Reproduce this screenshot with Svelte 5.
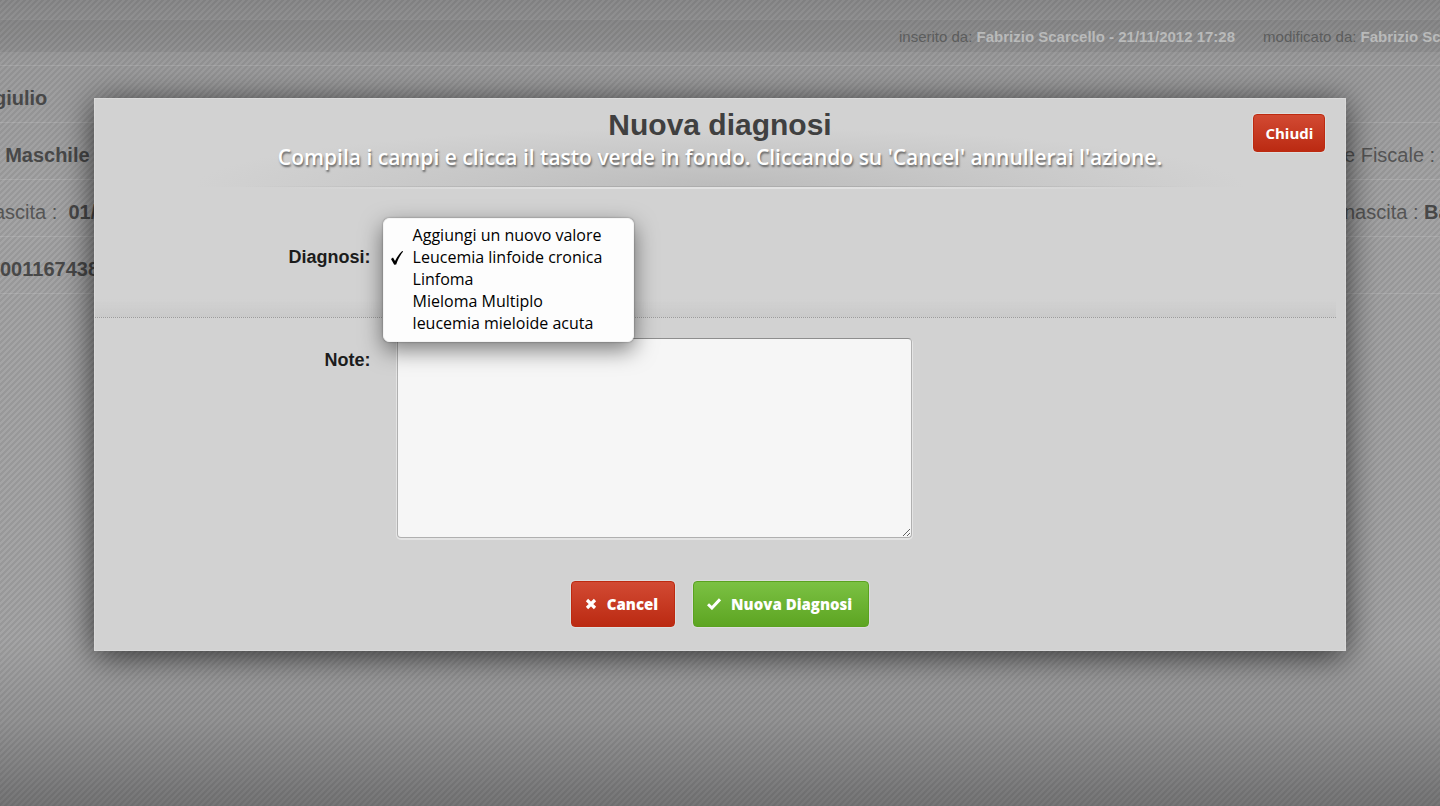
<script>
  const options = [
    'Aggiungi un nuovo valore',
    'Leucemia linfoide cronica',
    'Linfoma',
    'Mieloma Multiplo',
    'leucemia mieloide acuta'
  ];
  let diagnosis = $state('Leucemia linfoide cronica');
  let notes = $state('');
</script>

<div class="page">
  <div class="record">
    <div class="audit">
      <span>inserito da: <b>Fabrizio Scarcello - 21/11/2012 17:28</b></span>
      <span>modificato da: <b>Fabrizio Scarcello</b></span>
    </div>
    <div class="row"><span class="cut"><b>giulio</b></span></div>
    <div class="row">
      <span class="cut">: <b>Maschile</b></span>
      <span class="right">e Fiscale :</span>
    </div>
    <div class="row">
      <span class="cut">ascita : &nbsp;<b>01/</b></span>
      <span class="right">nascita : <b>Ba</b></span>
    </div>
    <div class="row"><span><b>001167438</b></span></div>
  </div>

  <div class="modal" role="dialog" aria-labelledby="title">
    <header>
      <h1 id="title">Nuova diagnosi</h1>
      <p>Compila i campi e clicca il tasto verde in fondo. Cliccando su 'Cancel' annullerai l'azione.</p>
      <button type="button" class="btn red close">Chiudi</button>
    </header>
    <form onsubmit={(e) => e.preventDefault()}>
      <div class="field diagnosis">
        <label for="diagnosis">Diagnosi:</label>
        <div class="anchor">
          <select id="diagnosis" size="5" bind:value={diagnosis}>
            {#each options as option}
              <option value={option}>{option}</option>
            {/each}
          </select>
        </div>
      </div>
      <div class="field notes">
        <label for="notes">Note:</label>
        <div class="control">
          <textarea id="notes" bind:value={notes}></textarea>
        </div>
      </div>
      <div class="actions">
        <button type="button" class="btn red">
          <svg width="12" height="12" viewBox="0 0 12 12" aria-hidden="true"><path d="M2 2 10 10M10 2 2 10" stroke="#fff" stroke-width="3.2" fill="none" /></svg>
          Cancel
        </button>
        <button type="submit" class="btn green">
          <svg width="14" height="12" viewBox="0 0 14 12" aria-hidden="true"><path d="M1 6.2 4.9 10 13 1.4" stroke="#fff" stroke-width="3" fill="none" /></svg>
          Nuova Diagnosi
        </button>
      </div>
    </form>
  </div>
</div>

<style>
  :global(body) {
    margin: 0;
    background: #8c8d8d;
  }
  .page {
    box-sizing: border-box;
    display: grid;
    align-items: start;
    min-height: 100vh;
    overflow: hidden;
    font-family: "Liberation Sans", Arial, sans-serif;
    background:
      linear-gradient(135deg, rgba(0, 0, 0, 0.07) 25%, transparent 25% 50%, rgba(0, 0, 0, 0.07) 50% 75%, transparent 75%) 0 0 / 6px 6px,
      linear-gradient(#8a8a8b 0, #9c9c9d 60px, #a4a4a5 200px, #a4a4a5 640px, #939394 720px, #757576 100%);
  }
  .record,
  .modal {
    grid-area: 1 / 1;
    min-width: 0;
  }
  .record {
    padding-top: 19px;
  }
  .audit {
    display: flex;
    justify-content: flex-end;
    gap: 28px;
    height: 32px;
    margin-bottom: 12px;
    margin-right: -49px;
    border-top: 1px solid rgba(255, 255, 255, 0.08);
    border-bottom: 1px solid rgba(255, 255, 255, 0.08);
    background: rgba(0, 0, 0, 0.05);
    font-size: 15px;
    line-height: 34px;
    color: #5c5d5d;
    white-space: nowrap;
  }
  .audit b {
    color: #b9baba;
  }
  .row {
    display: flex;
    justify-content: space-between;
    box-sizing: border-box;
    height: 57px;
    border-top: 1px solid rgba(255, 255, 255, 0.13);
    font-size: 20px;
    line-height: 64px;
    color: #555;
    white-space: nowrap;
  }
  .row:last-child {
    height: 58px;
    border-bottom: 1px solid rgba(255, 255, 255, 0.13);
  }
  .row b {
    color: #484848;
  }
  .cut {
    margin-left: -6px;
  }
  .right {
    width: 96px;
  }
  .modal {
    width: 87%;
    margin: 98px auto 0;
    box-sizing: border-box;
    border: 1px solid #dadada;
    background: #d2d2d2;
    box-shadow: 0 5px 32px rgba(0, 0, 0, 0.7);
  }
  header {
    position: relative;
    box-sizing: border-box;
    height: 90px;
    padding-top: 8px;
    text-align: center;
    background:
      linear-gradient(90deg, transparent 15%, #e2e2e2 40%, #e2e2e2 60%, transparent 85%) 0 100% / 100% 2px no-repeat,
      linear-gradient(90deg, transparent 12%, #adadad 40%, #adadad 60%, transparent 88%) 0 87px / 100% 1px no-repeat,
      radial-gradient(ellipse 42% 60px at 50% 100%, #bcbcbc, #d2d2d2) 0 0 / 100% 88px no-repeat;
  }
  h1 {
    margin: 0;
    font-size: 30px;
    line-height: 36px;
    color: #404040;
  }
  p {
    margin: 0;
    font: 600 21px/28px "Open Sans", sans-serif;
    color: #fff;
    text-shadow: 1px 2px 2px rgba(0, 0, 0, 0.5);
  }
  .btn {
    display: flex;
    align-items: center;
    justify-content: center;
    gap: 10px;
    border-radius: 4px;
    font: 800 15px/20px "Open Sans", sans-serif;
    color: #fff;
    box-shadow: 0 0 0 1px rgba(255, 255, 255, 0.25);
  }
  .red {
    border: 1px solid #bd2a10;
    background: linear-gradient(#d24a33, #bb2a12);
  }
  .green {
    border: 1px solid #5aa220;
    background: linear-gradient(#7bc143, #5da522);
  }
  .close {
    position: absolute;
    top: 15px;
    right: 20px;
    height: 38px;
    padding: 0 11px;
    font-weight: 700;
  }
  .field {
    display: grid;
    grid-template-columns: 276px 1fr;
    margin-right: 9px;
  }
  label {
    text-align: right;
    font-size: 18px;
    font-weight: 700;
    line-height: 24px;
    color: #1c1c1c;
  }
  .diagnosis {
    height: 129px;
    box-sizing: border-box;
    padding-top: 56px;
    border-bottom: 1px dotted #9c9c9c;
    background: linear-gradient(transparent 110px, #cacaca);
  }
  .anchor {
    position: relative;
  }
  select {
    position: absolute;
    z-index: 1;
    top: -27px;
    left: 12px;
    width: 251px;
    height: 124px;
    box-sizing: border-box;
    padding: 5px 0 7px;
    overflow: hidden;
    border: 1px solid #f4f4f4;
    border-radius: 6px;
    outline: none;
    background: #fdfdfd;
    box-shadow: 0 8px 22px rgba(0, 0, 0, 0.5), 0 0 2px rgba(0, 0, 0, 0.4);
    font: 16px/22px "Open Sans", sans-serif;
    color: #000;
  }
  option {
    height: 22px;
    min-height: 22px;
    box-sizing: border-box;
    padding: 0 0 0 29px;
    line-height: 22px;
    color: #000;
  }
  option:checked {
    color: #000;
    background: #fdfdfd url("data:image/svg+xml,%3Csvg xmlns='http://www.w3.org/2000/svg' width='14' height='16' viewBox='0 0 14 16'%3E%3Cpath d='M1 9 3 7.6 5 11 C7 7 9.5 3.5 12.2 1 L13.2 1.6 C10.4 5 8 9 6.2 14.5 L4.2 14.8Z'/%3E%3C/svg%3E") 6px 4px no-repeat;
  }
  .notes {
    padding-top: 20px;
  }
  .notes label {
    padding-top: 10px;
  }
  .control {
    padding-left: 26px;
  }
  textarea {
    display: block;
    width: 100%;
    max-width: 515px;
    height: 200px;
    box-sizing: border-box;
    border: 1px solid #b0b0b0;
    border-top-color: #8e8e8e;
    border-radius: 4px;
    background: #f6f6f6;
    box-shadow: 0 1px 0 1px rgba(255, 255, 255, 0.4);
    font: 16px/22px "Open Sans", sans-serif;
  }
  .actions {
    display: flex;
    justify-content: center;
    gap: 18px;
    padding: 43px 0 23px;
  }
  .actions .btn {
    height: 46px;
    padding: 0 16px 0 13px;
  }
</style>
